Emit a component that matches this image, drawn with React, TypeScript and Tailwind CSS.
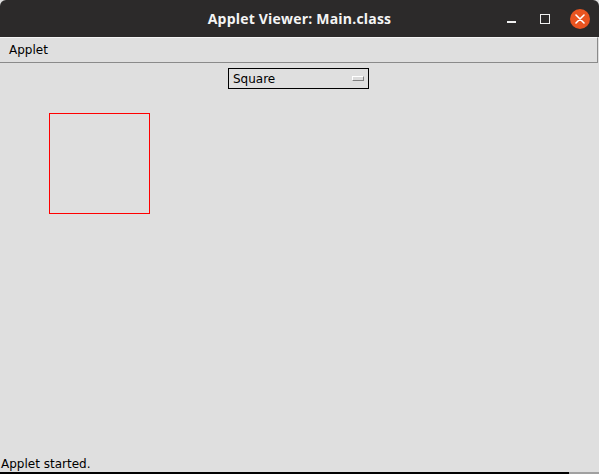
import * as React from 'react';

const dialog = { fontFamily: '"DejaVu Sans", sans-serif' };

export default function App() {
  const [shape] = React.useState('Square');

  return (
    <div className="w-[599px] h-[474px] flex flex-col bg-[#dfdfdf] overflow-hidden">
      {/* Window title bar */}
      <div className="h-[37px] shrink-0 bg-[#2c2a2a] relative flex items-center justify-center rounded-t-[6px]">
        <span
          className="text-[14px] font-bold text-[#f4f4f4] tracking-[0.2px]"
          style={{ fontFamily: '"Open Sans", "Noto Sans", sans-serif' }}
        >
          Applet Viewer: Main.class
        </span>
        <div className="absolute right-[9px] top-0 h-full flex items-center gap-[20px]">
          <div className="w-[9px] h-[1.5px] bg-[#f0f0f0] mt-[7px]" />
          <div className="w-[10px] h-[10px] border border-[#f0f0f0] ml-[4px]" />
          <div className="w-[20px] h-[20px] rounded-full bg-[#e95420] flex items-center justify-center">
            <svg width="10" height="10" viewBox="0 0 10 10">
              <path d="M1 1L9 9M9 1L1 9" stroke="#ffffff" strokeWidth="1.6" strokeLinecap="round" />
            </svg>
          </div>
        </div>
      </div>

      {/* Menu bar */}
      <div
        className="h-[26px] shrink-0 border-t border-t-[#f4f4f4] border-b border-b-[#8a8a8a] border-r border-r-[#8a8a8a] mr-[1px] flex items-center pl-[9px] text-[12px] text-black"
        style={dialog}
      >
        Applet
      </div>

      {/* Applet area */}
      <div className="flex-1 flex flex-col" style={dialog}>
        <div className="flex mt-[5px] pl-[228px]">
          <div className="w-[141px] h-[21px] border border-black flex items-center justify-between pl-[4px] pr-[4px] text-[12px] text-black">
            <span>{shape}</span>
            <div className="w-[12px] h-[5px] border-t border-l border-t-white border-l-white border-b border-r border-b-[#808080] border-r-[#808080] bg-[#dcdcdc]" />
          </div>
        </div>
        <div className="ml-[49px] mt-[24px] w-[101px] h-[101px] border border-[#ff0000]" />
        <div className="flex-1" />
        <div className="h-[16px] pl-[1px] text-[12px] leading-[16px] text-black">Applet started.</div>
      </div>

      {/* Bottom edge */}
      <div className="h-[2px] shrink-0 flex">
        <div className="w-[569px] bg-black" />
        <div className="flex-1 bg-[#a0a0a0]" />
      </div>
    </div>
  );
}
